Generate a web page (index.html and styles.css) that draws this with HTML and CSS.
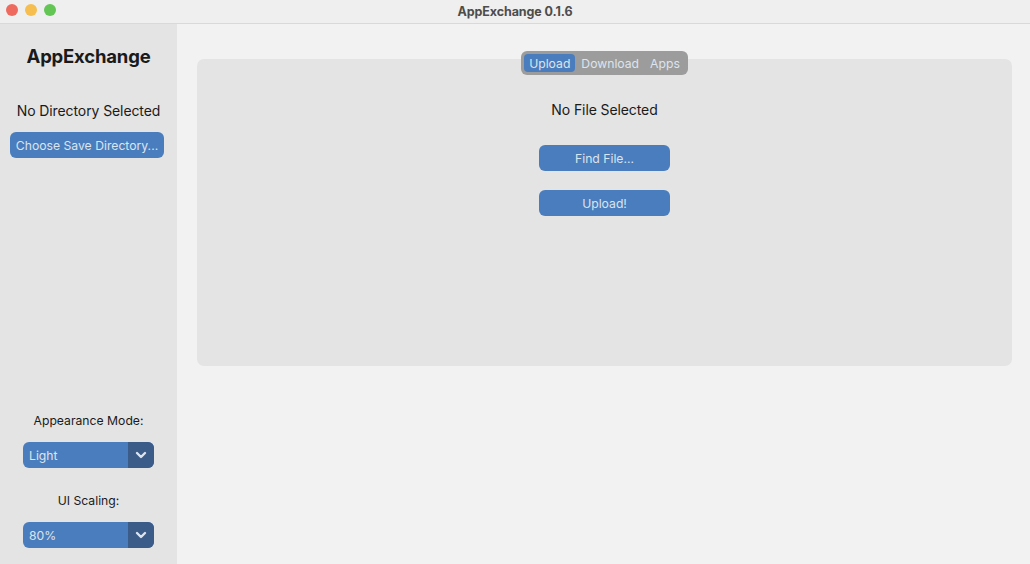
FILE: index.html
```html
<!DOCTYPE html>
<html lang="en">
<head>
<meta charset="utf-8">
<title>AppExchange 0.1.6</title>
<link rel="stylesheet" href="styles.css">
</head>
<body>
<div class="window">
  <header class="titlebar">
    <div class="lights">
      <span class="light red"></span>
      <span class="light yellow"></span>
      <span class="light green"></span>
    </div>
    <div class="title">AppExchange 0.1.6</div>
  </header>
  <div class="content">
    <aside class="sidebar">
      <h1 class="app-name">AppExchange</h1>
      <p class="dir-label">No Directory Selected</p>
      <button class="btn btn-dir">Choose Save Directory...</button>
      <div class="spacer"></div>
      <p class="small-label">Appearance Mode:</p>
      <div class="dropdown">
        <span class="dd-value">Light</span>
        <span class="dd-arrow"><svg width="12" height="8" viewBox="0 0 12 8"><path d="M2 2 L6 6 L10 2" fill="none" stroke="#dce4ee" stroke-width="2.4" stroke-linecap="round" stroke-linejoin="round"/></svg></span>
      </div>
      <p class="small-label scale-label">UI Scaling:</p>
      <div class="dropdown">
        <span class="dd-value">80%</span>
        <span class="dd-arrow"><svg width="12" height="8" viewBox="0 0 12 8"><path d="M2 2 L6 6 L10 2" fill="none" stroke="#dce4ee" stroke-width="2.4" stroke-linecap="round" stroke-linejoin="round"/></svg></span>
      </div>
    </aside>
    <main class="main">
      <nav class="segmented">
        <span class="seg selected">Upload</span>
        <span class="seg">Download</span>
        <span class="seg">Apps</span>
      </nav>
      <section class="tabview">
        <p class="file-label">No File Selected</p>
        <button class="btn btn-action">Find File...</button>
        <button class="btn btn-action btn-upload">Upload!</button>
      </section>
    </main>
  </div>
</div>
</body>
</html>
```

FILE: styles.css
```css
* { box-sizing: border-box; }
html, body { margin: 0; padding: 0; }
body {
  width: 1030px;
  height: 564px;
  overflow: hidden;
  font-family: Inter, "Liberation Sans", sans-serif;
  background: #f2f2f2;
  color: #1a1a1a;
}
.window { display: flex; flex-direction: column; height: 564px; }
.titlebar {
  height: 24px;
  flex: none;
  display: flex;
  align-items: center;
  justify-content: center;
  position: relative;
  background: #efefef;
  border-bottom: 1px solid #d9d9d9;
}
.lights {
  position: absolute;
  left: 6px;
  top: 4px;
  display: flex;
  gap: 7px;
}
.light { width: 12px; height: 12px; border-radius: 50%; display: block; }
.red { background: #ee6a5f; }
.yellow { background: #f5be4f; }
.green { background: #62c554; }
.title {
  font-size: 12.5px;
  font-weight: 700;
  color: #4c4c4c;
  letter-spacing: -0.1px;
}
.content { flex: 1; display: flex; min-height: 0; }
.sidebar {
  width: 177px;
  flex: none;
  background: #e4e4e4;
  display: flex;
  flex-direction: column;
  align-items: center;
  padding: 20px 0 16px;
}
.app-name {
  margin: 0;
  font-size: 18.5px;
  line-height: 24px;
  font-weight: 700;
  color: #1a1a1a;
  letter-spacing: -0.2px;
}
.dir-label {
  margin: 34px 0 0;
  font-size: 14px;
  line-height: 18px;
  letter-spacing: -0.1px;
}
.btn {
  border: none;
  border-radius: 6px;
  background: #4a7dbd;
  color: #dce4ee;
  font-family: inherit;
  font-size: 12.2px;
  height: 26px;
  padding: 0;
  display: block;
}
.btn-dir { margin: 12px 3px 0 0; width: 154px; }
.spacer { flex: 1; }
.small-label {
  margin: 0;
  font-size: 12.2px;
  line-height: 16px;
}
.scale-label { margin-top: 25px; }
.dropdown {
  margin-top: 13px;
  width: 131px;
  height: 26px;
  border-radius: 6px;
  background: #4a7dbd;
  display: flex;
  overflow: hidden;
}
.scale-label + .dropdown { margin-top: 13px; }
.dd-value {
  flex: 1;
  color: #dce4ee;
  font-size: 12.2px;
  line-height: 27px;
  padding-left: 6px;
}
.dd-arrow {
  width: 26px;
  background: #3b5b89;
  display: flex;
  align-items: center;
  justify-content: center;
}
.main {
  flex: 1;
  display: flex;
  flex-direction: column;
  align-items: center;
  padding: 27px 18px 0 20px;
}
.segmented {
  position: relative;
  z-index: 1;
  height: 24px;
  margin-bottom: -16px;
  background: #9c9c9c;
  border-radius: 6px;
  padding: 3px;
  display: flex;
}
.seg {
  font-size: 12.2px;
  line-height: 19px;
  color: #dce4ee;
  padding: 0 5px;
  border-radius: 4px;
}
.seg + .seg { margin-left: 1px; }
.seg.selected { background: #4a7dbd; }
.tabview {
  width: 100%;
  height: 307px;
  background: #e4e4e4;
  border-radius: 7px;
  display: flex;
  flex-direction: column;
  align-items: center;
  padding-top: 42px;
}
.file-label {
  margin: 0;
  font-size: 14px;
  line-height: 18px;
  letter-spacing: -0.1px;
}
.btn-action { width: 131px; margin-top: 26px; }
.btn-upload { margin-top: 19px; }
```
